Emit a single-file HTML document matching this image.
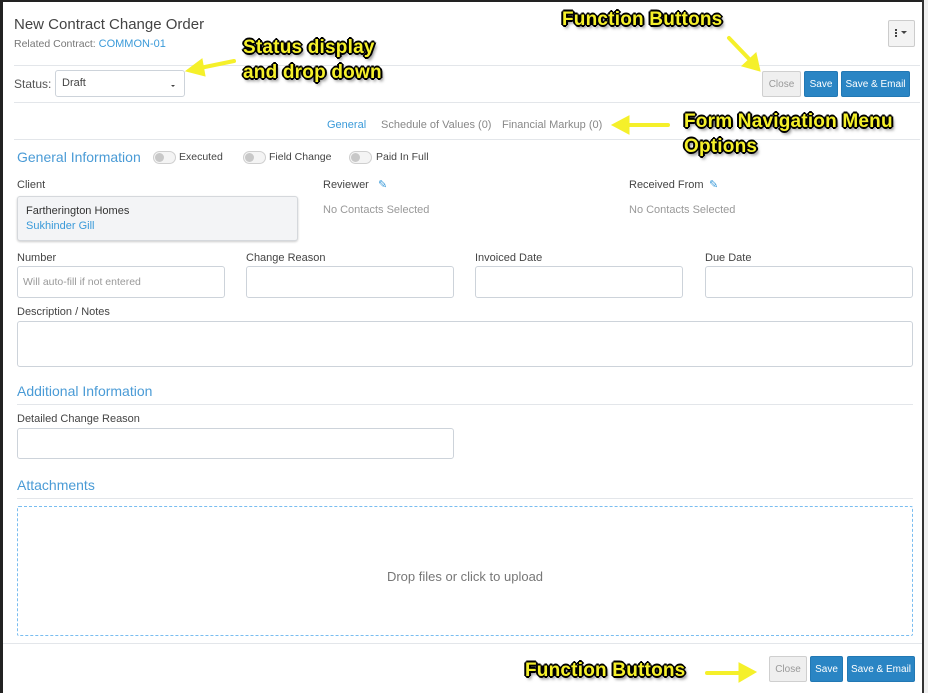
<!DOCTYPE html>
<html><head><meta charset="utf-8"><style>
*{margin:0;padding:0;box-sizing:border-box}
body{width:928px;height:693px;position:relative;overflow:hidden;background:#fff;font-family:"Liberation Sans",sans-serif;color:#444}
.a{position:absolute}
.line{position:absolute;height:1px;background:#e3e6ea}
.lbl{position:absolute;font-size:11px;color:#444}
.inp{position:absolute;border:1px solid #cdd3da;border-radius:3px;background:#fff}
.btn{position:absolute;font-size:10px;display:flex;align-items:center;justify-content:center;border-radius:2px}
.close{background:#efefef;border:1px solid #cfcfcf;color:#999}
.blue{background:#2a85c4;color:#fff;border:1px solid #2278b4}
.sec{position:absolute;font-size:14px;color:#4a9bd6}
.tog{position:absolute;width:23px;height:13px;border:1px solid #cfcfcf;border-radius:7px;background:#f4f4f4}
.tog:before{content:"";position:absolute;left:1px;top:1px;width:9px;height:9px;border-radius:50%;background:#c8c8c8}
.ann{position:absolute;font-weight:bold;font-size:19px;color:#f5f02a;letter-spacing:0.2px;text-shadow:-1px -1px 0 #000,1px -1px 0 #000,-1px 1px 0 #000,1px 1px 0 #000,0 2px 0 #000,2px 0 0 #000,-2px 0 0 #000,0 -2px 0 #000,2px 3px 3px rgba(0,0,0,.6);white-space:nowrap;line-height:22px}
.grey{color:#999}
</style></head><body>
<div class="a" style="left:0;top:0;width:3px;height:693px;background:#222"></div>
<div class="a" style="left:0;top:0;width:928px;height:2px;background:#222"></div>
<div class="a" style="left:922px;top:0;width:2px;height:693px;background:#333"></div>
<div class="a" style="left:924px;top:0;width:4px;height:693px;background:#f0f0f0"></div>

<div class="a" style="left:14px;top:16px;font-size:15px;color:#444">New Contract Change Order</div>
<div class="a" style="left:14px;top:38px;font-size:10.5px;color:#777">Related Contract: <span style="color:#3a9ad9;font-size:11px">COMMON-01</span></div>
<div class="a" style="left:888px;top:20px;width:27px;height:27px;border:1px solid #ccc;background:#f3f3f3;border-radius:2px"></div>
<div class="a" style="left:895px;top:29px;width:2px;height:2px;background:#444;box-shadow:0 3px 0 #444,0 6px 0 #444"></div>
<div class="a" style="left:901px;top:31px;width:0;height:0;border-left:3px solid transparent;border-right:3px solid transparent;border-top:3px solid #444"></div>
<div class="line" style="left:14px;top:65px;width:906px"></div>

<div class="a" style="left:14px;top:77px;font-size:12px;color:#555">Status:</div>
<div class="inp" style="left:55px;top:70px;width:130px;height:27px"></div>
<div class="a" style="left:62px;top:77px;font-size:11px;color:#444">Draft</div>
<div class="a" style="left:171px;top:85px;border-left:2.5px solid transparent;border-right:2.5px solid transparent;border-top:2.5px solid #444"></div>
<div class="btn close" style="left:762px;top:71px;width:39px;height:26px">Close</div>
<div class="btn blue" style="left:804px;top:71px;width:34px;height:26px">Save</div>
<div class="btn blue" style="left:841px;top:71px;width:69px;height:26px">Save &amp; Email</div>
<div class="line" style="left:14px;top:102px;width:906px"></div>

<div class="a" style="left:327px;top:119px;font-size:11px;color:#3a9ad9">General</div>
<div class="a grey" style="left:381px;top:119px;font-size:11px;color:#888">Schedule of Values (0)</div>
<div class="a" style="left:502px;top:119px;font-size:11px;color:#888">Financial Markup (0)</div>
<div class="line" style="left:14px;top:139px;width:906px"></div>

<div class="sec" style="left:17px;top:149px">General Information</div>
<div class="tog" style="left:153px;top:151px"></div><div class="lbl" style="left:179px;top:151px;font-size:10.5px">Executed</div>
<div class="tog" style="left:243px;top:151px"></div><div class="lbl" style="left:269px;top:151px;font-size:10.5px">Field Change</div>
<div class="tog" style="left:349px;top:151px"></div><div class="lbl" style="left:376px;top:151px;font-size:10.5px">Paid In Full</div>

<div class="lbl" style="left:17px;top:179px">Client</div>
<div class="a" style="left:17px;top:196px;width:281px;height:45px;background:#f3f4f6;border:1px solid #d5d8dc;border-radius:3px;box-shadow:0 1px 2px rgba(0,0,0,.2)"></div>
<div class="a" style="left:26px;top:205px;font-size:11px;color:#333">Fartherington Homes</div>
<div class="a" style="left:26px;top:220px;font-size:11px;color:#3a9ad9">Sukhinder Gill</div>
<div class="lbl" style="left:323px;top:179px">Reviewer</div>
<div class="a" style="left:378px;top:178px;font-size:11px;color:#3a9ad9">✎</div>
<div class="a" style="left:323px;top:204px;font-size:11px;color:#999">No Contacts Selected</div>
<div class="lbl" style="left:629px;top:179px">Received From</div>
<div class="a" style="left:709px;top:178px;font-size:11px;color:#3a9ad9">✎</div>
<div class="a" style="left:629px;top:204px;font-size:11px;color:#999">No Contacts Selected</div>

<div class="lbl" style="left:17px;top:252px">Number</div>
<div class="lbl" style="left:246px;top:252px">Change Reason</div>
<div class="lbl" style="left:475px;top:252px">Invoiced Date</div>
<div class="lbl" style="left:705px;top:252px">Due Date</div>
<div class="inp" style="left:17px;top:266px;width:208px;height:32px"></div>
<div class="a" style="left:23px;top:276px;font-size:10.5px;color:#999">Will auto-fill if not entered</div>
<div class="inp" style="left:246px;top:266px;width:208px;height:32px"></div>
<div class="inp" style="left:475px;top:266px;width:208px;height:32px"></div>
<div class="inp" style="left:705px;top:266px;width:208px;height:32px"></div>

<div class="lbl" style="left:17px;top:306px">Description / Notes</div>
<div class="inp" style="left:17px;top:321px;width:896px;height:46px"></div>

<div class="sec" style="left:17px;top:383px">Additional Information</div>
<div class="line" style="left:17px;top:404px;width:896px"></div>
<div class="lbl" style="left:17px;top:413px">Detailed Change Reason</div>
<div class="inp" style="left:17px;top:428px;width:437px;height:31px"></div>

<div class="sec" style="left:17px;top:477px">Attachments</div>
<div class="line" style="left:17px;top:498px;width:896px"></div>
<div class="a" style="left:17px;top:506px;width:896px;height:130px;border:1px dashed #79bdf0;border-radius:2px"></div>
<div class="a" style="left:17px;top:569px;width:896px;text-align:center;font-size:13px;color:#777">Drop files or click to upload</div>

<div class="line" style="left:3px;top:643px;width:919px"></div>
<div class="btn close" style="left:769px;top:656px;width:38px;height:26px">Close</div>
<div class="btn blue" style="left:810px;top:656px;width:33px;height:26px">Save</div>
<div class="btn blue" style="left:847px;top:656px;width:68px;height:26px">Save &amp; Email</div>

<div class="ann" style="left:562px;top:9px">Function Buttons</div>
<div class="ann" style="left:243px;top:37px">Status display</div>
<div class="ann" style="left:243px;top:62px">and drop down</div>
<div class="ann" style="left:684px;top:111px">Form Navigation Menu</div>
<div class="ann" style="left:684px;top:136px">Options</div>
<div class="ann" style="left:525px;top:660px">Function Buttons</div>

<svg class="a" style="left:0;top:0" width="928" height="693">
<g fill="#f5f02a" stroke="#f5f02a" stroke-linecap="round">
<line x1="729" y1="38" x2="752" y2="62" stroke-width="4"/>
<polygon points="760,71 742,66 756,53"/>
<line x1="234" y1="61" x2="200" y2="68" stroke-width="4"/>
<polygon points="186,71 202,59 205,76"/>
<line x1="668" y1="125" x2="628" y2="125" stroke-width="4"/>
<polygon points="612,125 629,116 629,134"/>
<line x1="707" y1="673" x2="740" y2="673" stroke-width="4"/>
<polygon points="756,672 739,663 739,682"/>
</g>
</svg>
</body></html>
